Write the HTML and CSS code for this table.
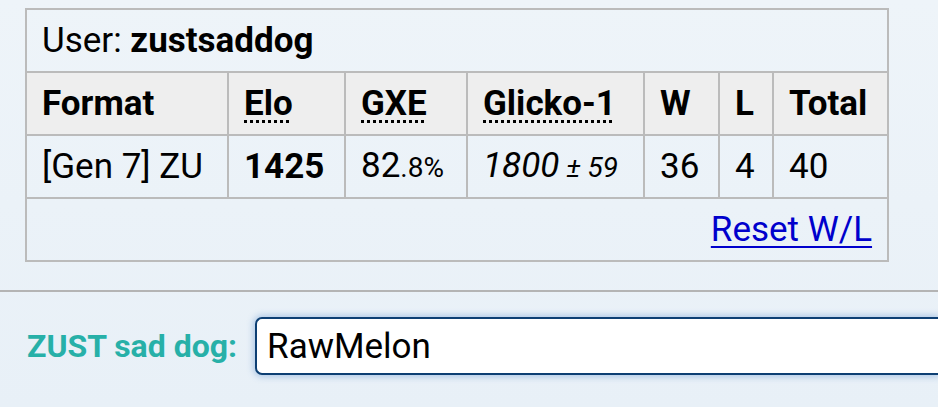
FILE: index.html
```html
<!DOCTYPE html>
<html lang="en">
<head>
  <meta charset="UTF-8" />
  <title>User details</title>
  <link rel="stylesheet" href="styles.css">
</head>
<body>

  <!-- Ranking table -->
  <div class="ladder">
    <table class="ladder-table">
      <colgroup>
        <col class="c-format">
        <col class="c-elo">
        <col class="c-gxe">
        <col class="c-glicko">
        <col class="c-w">
        <col class="c-l">
        <col class="c-total">
      </colgroup>
      <tr>
        <td colspan="7">User: <strong>zustsaddog</strong></td>
      </tr>
      <tr class="head">
        <th>Format</th>
        <th><abbr title="Elo rating">Elo</abbr></th>
        <th><abbr title="user's percentage chance of winning a random battle">GXE</abbr></th>
        <th><abbr title="Glicko-1 rating system: rating&plusmn;deviation">Glicko-1</abbr></th>
        <th>W</th>
        <th>L</th>
        <th>Total</th>
      </tr>
      <tr>
        <td>[Gen 7] ZU</td>
        <td><strong>1425</strong></td>
        <td>82<small>.8%</small></td>
        <td><em>1800<small> &plusmn; 59</small></em></td>
        <td>36</td>
        <td>4</td>
        <td>40</td>
      </tr>
      <tr>
        <td colspan="7" class="reset"><a href="#">Reset W/L</a></td>
      </tr>
    </table>
  </div>

  <hr class="rule">

  <!-- Name field -->
  <form class="rename">
    <label for="nombre">ZUST sad dog:</label>
    <input id="nombre" type="text" value="RawMelon">
  </form>

</body>
</html>
```

FILE: styles.css
```css
html, body {
  margin: 0;
  height: 100%;
  overflow: hidden;
}

body {
  font-family: Roboto, "Liberation Sans", sans-serif;
  color: #000;
  background: linear-gradient(180deg, #eef4f9 0%, #e8f0f7 100%);
}

.ladder {
  padding: 8px 0 0 25px;
}

.ladder-table {
  border-collapse: collapse;
  width: 862px;
  table-layout: fixed;
  font-size: 35px;
}

.c-format { width: 202px; }
.c-elo { width: 117px; }
.c-gxe { width: 122px; }
.c-glicko { width: 177px; }
.c-w { width: 75px; }
.c-l { width: 54px; }
.c-total { width: 115px; }

.ladder-table td,
.ladder-table th {
  border: 2px solid #bbbbbb;
  padding: 0 15px;
  height: 61px;
  text-align: left;
  white-space: nowrap;
  line-height: 40px;
}

.ladder-table th {
  font-weight: bold;
}

.head {
  background-color: #eeeeee;
}

abbr {
  text-decoration: underline dotted;
  text-decoration-thickness: 3px;
  text-underline-offset: 5px;
}

small {
  font-size: 28px;
}

.reset {
  text-align: right !important;
}

.reset a {
  color: #0000cc;
  text-decoration: underline;
  text-decoration-thickness: 2px;
  text-underline-offset: 5px;
}

.rule {
  margin: 28px 0 0 0;
  border: 0;
  border-top: 2px solid #b4b4b4;
  height: 0;
}

.rename {
  display: flex;
  align-items: center;
  gap: 18px;
  padding: 25px 0 0 27px;
  margin: 0;
}

.rename label {
  flex: none;
  white-space: nowrap;
  color: #27b0a8;
  font-weight: bold;
  font-size: 32px;
}

.rename input {
  flex: 1;
  min-width: 0;
  box-sizing: border-box;
  height: 58px;
  padding: 0 10px;
  border: 2px solid #0d3f73;
  border-right: none;
  border-radius: 7px 0 0 7px;
  background: #fff;
  font-family: Roboto, "Liberation Sans", sans-serif;
  font-size: 35px;
  color: #000;
  box-shadow: 0 0 6px 2px rgba(70, 130, 200, 0.35);
  outline: none;
}
```
